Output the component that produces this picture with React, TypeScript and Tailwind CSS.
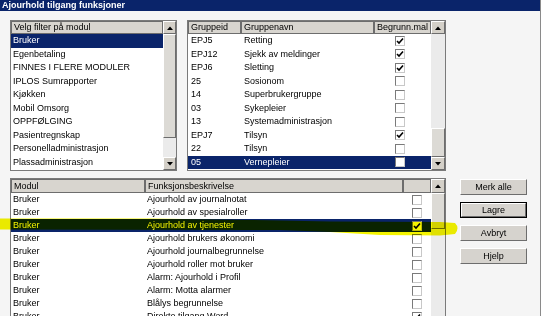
import React from 'react';

const MODULES = [
  'Bruker',
  'Egenbetaling',
  'FINNES I FLERE MODULER',
  'IPLOS Sumrapporter',
  'Kjøkken',
  'Mobil Omsorg',
  'OPPFØLGING',
  'Pasientregnskap',
  'Personelladministrasjon',
  'Plassadministrasjon',
];

const GROUPS: [string, string, boolean][] = [
  ['EPJ5', 'Retting', true],
  ['EPJ12', 'Sjekk av meldinger', true],
  ['EPJ6', 'Sletting', true],
  ['25', 'Sosionom', false],
  ['14', 'Superbrukergruppe', false],
  ['03', 'Sykepleier', false],
  ['13', 'Systemadministrasjon', false],
  ['EPJ7', 'Tilsyn', true],
  ['22', 'Tilsyn', false],
  ['05', 'Vernepleier', false],
];

const FUNCTIONS: [string, boolean][] = [
  ['Ajourhold av journalnotat', false],
  ['Ajourhold av spesialroller', false],
  ['Ajourhold av tjenester', true],
  ['Ajourhold brukers økonomi', false],
  ['Ajourhold journalbegrunnelse', false],
  ['Ajourhold roller mot bruker', false],
  ['Alarm: Ajourhold i Profil', false],
  ['Alarm: Motta alarmer', false],
  ['Blålys begrunnelse', false],
  ['Direkte tilgang Word', true],
];

// small sunken checkbox
const Check: React.FC<{ checked: boolean }> = ({ checked }) => (
  <div className="w-[10px] h-[10px] bg-white border-t border-l border-[#7a7a7a] border-r-[#c8c8c8] border-b-[#c8c8c8] border-r border-b flex items-center justify-center">
    {checked && (
      <svg width="8" height="8" viewBox="0 0 8 8">
        <path d="M1 4 L3 6 L7 1.5" stroke="#000" strokeWidth="1.6" fill="none" />
      </svg>
    )}
  </div>
);

const Arrow: React.FC<{ up?: boolean; h: string }> = ({ up, h }) => (
  <div className={`${h} shrink-0 bg-[#d4d0c8] border-t border-l border-white border-r border-b border-r-[#6d6d6d] border-b-[#6d6d6d] flex items-center justify-center`}>
    <svg width="6" height="4" viewBox="0 0 6 4">
      <path d={up ? 'M0 4 L3 0.5 L6 4 Z' : 'M0 0 L3 3.5 L6 0 Z'} fill="#000" />
    </svg>
  </div>
);

const Thumb: React.FC<{ h: string }> = ({ h }) => (
  <div className={`${h} shrink-0 bg-[#dcdad5] border-t border-l border-white border-r border-b border-r-[#6d6d6d] border-b-[#6d6d6d]`} />
);

const Track: React.FC<{ h?: string }> = ({ h }) => <div className={`${h ?? 'flex-1'} bg-[#ebebeb]`} />;

const HeaderCell: React.FC<{ w: string; children?: React.ReactNode }> = ({ w, children }) => (
  <div className={`${w} h-full shrink-0 bg-[#d8d5cf] border border-[#6d6d6d] px-[2px] flex items-center overflow-hidden whitespace-nowrap`}>
    {children}
  </div>
);

const Button: React.FC<{ label: string; isDefault?: boolean }> = ({ label, isDefault }) => (
  <div className={`h-[16px] w-[67px] ${isDefault ? 'border border-black' : ''}`}>
    <div className="h-full w-full bg-[#d6d3ce] border-t border-l border-white border-r border-b border-r-[#6d6d6d] border-b-[#6d6d6d] flex items-center justify-center text-[9px] text-black">
      {label}
    </div>
  </div>
);

const App: React.FC = () => {
  return (
    <div className="w-[543px] h-[324px] bg-white overflow-hidden relative font-['Liberation_Sans',Arial,sans-serif] text-[9px] leading-none text-black">
      <div className="w-[541px] h-[316px] bg-[#f5f5f5] border-r border-[#8a8a8a] flex flex-col">
        {/* title bar */}
        <div className="h-[11px] shrink-0 bg-[#0a246a] text-white font-bold text-[9px] pl-[2px] flex items-center">
          Ajourhold tilgang funksjoner
        </div>

        <div className="pl-[10px] pt-[9px] flex flex-col">
          {/* top row */}
          <div className="flex gap-[10px]">
            {/* module filter list */}
            <div className="w-[167px] h-[151px] border border-[#7a7a7a] bg-white flex">
              <div className="w-[152px] flex flex-col">
                <div className="h-[13px] shrink-0">
                  <HeaderCell w="w-full">Velg filter på modul</HeaderCell>
                </div>
                {MODULES.map((m, i) => (
                  <div
                    key={m}
                    className={`h-[13.5px] px-[2px] flex items-center whitespace-nowrap ${i === 0 ? 'bg-[#0a246a] text-white' : ''}`}
                  >
                    {m}
                  </div>
                ))}
              </div>
              <div className="w-[13px] flex flex-col">
                <Arrow up h="h-[13px]" />
                <Thumb h="h-[104px]" />
                <Track />
                <Arrow h="h-[13px]" />
              </div>
            </div>

            {/* group grid */}
            <div className="w-[259px] h-[151px] border border-[#7a7a7a] bg-white flex">
              <div className="w-[243px] flex flex-col">
                <div className="h-[13px] shrink-0 flex">
                  <HeaderCell w="w-[53px]">Gruppeid</HeaderCell>
                  <HeaderCell w="w-[133px]">Gruppenavn</HeaderCell>
                  <HeaderCell w="w-[57px]">Begrunn.mal</HeaderCell>
                </div>
                {GROUPS.map(([id, name, c], i) => (
                  <div
                    key={id + name}
                    className={`h-[13.5px] flex items-center whitespace-nowrap ${i === 9 ? 'bg-[#0a246a] text-white' : ''}`}
                  >
                    <div className="w-[53px] px-[3px]">{id}</div>
                    <div className="w-[133px] px-[3px]">{name}</div>
                    <div className="w-[57px] flex justify-center pr-[6px]">
                      <Check checked={c} />
                    </div>
                  </div>
                ))}
              </div>
              <div className="w-[14px] flex flex-col">
                <Arrow up h="h-[13px]" />
                <Track />
                <Thumb h="h-[29px]" />
                <Arrow h="h-[13px]" />
              </div>
            </div>
          </div>

          {/* bottom row */}
          <div className="flex gap-[14px] mt-[7px]">
            <div className="w-[436px] h-[138px] border-t border-l border-r border-[#7a7a7a] bg-white flex overflow-hidden">
              <div className="w-[420px] flex flex-col">
                <div className="h-[14px] shrink-0 flex">
                  <HeaderCell w="w-[134px]">Modul</HeaderCell>
                  <HeaderCell w="w-[258px]">Funksjonsbeskrivelse</HeaderCell>
                  <HeaderCell w="w-[28px]" />
                </div>
                {FUNCTIONS.map(([f, c], i) => (
                  <div
                    key={f}
                    className={`h-[13px] shrink-0 flex items-center whitespace-nowrap ${i === 2 ? 'bg-[#0a246a] text-white' : ''}`}
                  >
                    <div className="w-[134px] px-[2px]">Bruker</div>
                    <div className="w-[258px] px-[2px]">{f}</div>
                    <div className="w-[28px] flex justify-center">
                      <Check checked={c} />
                    </div>
                  </div>
                ))}
              </div>
              <div className="w-[14px] flex flex-col">
                <Arrow up h="h-[14px]" />
                <Thumb h="h-[36px]" />
                <Track />
              </div>
            </div>

            <div className="flex flex-col gap-[7px] pt-[1px]">
              <Button label="Merk alle" />
              <Button label="Lagre" isDefault />
              <Button label="Avbryt" />
              <Button label="Hjelp" />
            </div>
          </div>
        </div>
      </div>

      {/* yellow highlighter mark over the selected row */}
      <svg
        className="absolute left-0 top-[215px] mix-blend-multiply pointer-events-none"
        width="462"
        height="24"
        viewBox="0 0 462 24"
      >
        <path
          d="M0 3.5 L150 3.5 L250 5 L330 6.5 L440 7 L455 8 Q460 13 455 19 L440 20.5 L380 20 L330 17 L280 15 L0 14.5 Z"
          fill="#f4f400"
        />
      </svg>
    </div>
  );
};

export default App;
